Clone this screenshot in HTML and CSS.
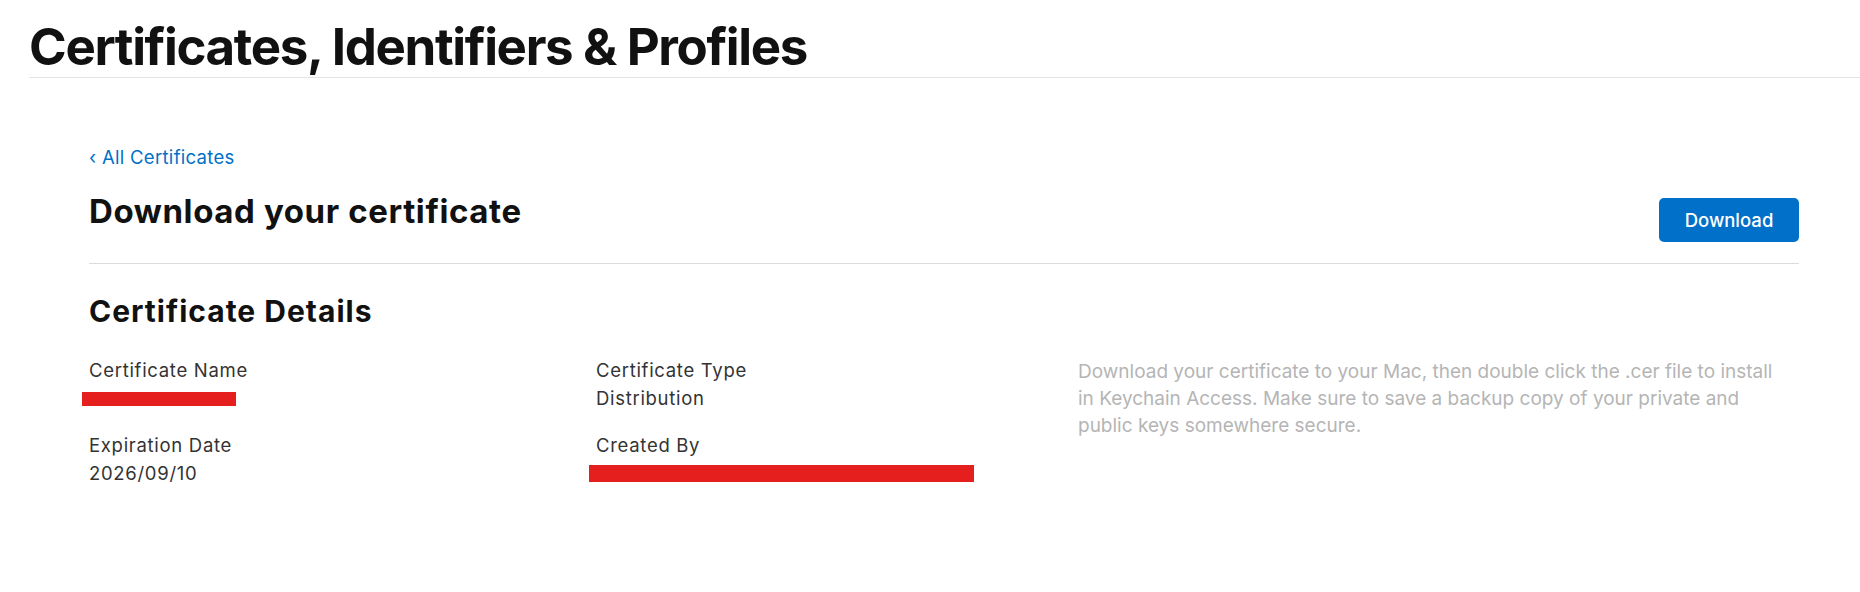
FILE: index.html
```html
<!DOCTYPE html>
<html lang="en">
<head>
<meta charset="utf-8">
<title>Certificates, Identifiers &amp; Profiles</title>
<link rel="stylesheet" href="styles.css">
</head>
<body>
  <header class="page-header">
    <h1 class="page-title">Certificates, Identifiers &amp; Profiles</h1>
  </header>
  <main class="content">
    <a class="back-link" href="#"><span class="chev">‹</span> All Certificates</a>
    <div class="head-row">
      <h2 class="head-title">Download your certificate</h2>
      <button class="btn-primary" type="button">Download</button>
    </div>
    <section class="details">
      <h3 class="details-title">Certificate Details</h3>
      <div class="details-grid">
        <div class="field">
          <div class="label">Certificate Name</div>
          <div class="value"><span class="redact redact-name"></span></div>
        </div>
        <div class="field">
          <div class="label">Certificate Type</div>
          <div class="value">Distribution</div>
        </div>
        <p class="hint">Download your certificate to your Mac, then double click the .cer file to install in Keychain Access. Make sure to save a backup copy of your private and public keys somewhere secure.</p>
        <div class="field">
          <div class="label">Expiration Date</div>
          <div class="value">2026/09/10</div>
        </div>
        <div class="field">
          <div class="label">Created By</div>
          <div class="value"><span class="redact redact-creator"></span></div>
        </div>
      </div>
    </section>
  </main>
</body>
</html>
```

FILE: styles.css
```css
* { box-sizing: border-box; }

html, body {
  margin: 0;
  padding: 0;
  background: #ffffff;
}

body {
  font-family: "Inter", "Noto Sans", "Liberation Sans", sans-serif;
  color: #333333;
  -webkit-font-smoothing: antialiased;
}

.page-header {
  margin-left: 29px;
  padding-top: 21px;
  padding-bottom: 5px;
  border-bottom: 1px solid #e3e3e3;
}

.page-title {
  margin: 0;
  font-size: 51px;
  line-height: 51px;
  font-weight: 700;
  letter-spacing: -1.35px;
  color: #111111;
}

.content {
  padding: 0 61px 0 89px;
}

.back-link {
  display: block;
  margin-top: 67px;
  font-size: 18.5px;
  line-height: 24px;
  letter-spacing: 0.3px;
  color: #0070c9;
  text-decoration: none;
}

.head-row {
  display: flex;
  justify-content: space-between;
  align-items: flex-start;
  margin-top: 24px;
  padding-bottom: 21px;
  border-bottom: 1px solid #dcdcdc;
}

.head-title {
  margin: 0;
  font-size: 33px;
  line-height: 36px;
  font-weight: 700;
  letter-spacing: 0.6px;
  color: #111111;
}

.btn-primary {
  margin-top: 5px;
  width: 140px;
  height: 44px;
  border: 0;
  border-radius: 5px;
  background: #0070c9;
  color: #ffffff;
  font-family: inherit;
  font-size: 18.5px;
  font-weight: 500;
  cursor: pointer;
}

.details-title {
  margin: 30px 0 0;
  font-size: 30px;
  line-height: 34px;
  font-weight: 700;
  letter-spacing: 1px;
  color: #111111;
}

.details-grid {
  display: grid;
  grid-template-columns: 507px 482px 1fr;
  row-gap: 19px;
  margin-top: 28px;
}

.field {
  font-size: 18.5px;
  line-height: 28px;
  letter-spacing: 0.7px;
}

.label {
  color: #333333;
}

.value {
  display: flow-root;
  color: #333333;
  height: 28px;
}

.hint {
  grid-column: 3;
  grid-row: 1 / span 2;
  margin: 2px 0 0;
  font-size: 19px;
  line-height: 27px;
  color: #b5b5b5;
  max-width: 710px;
}

.redact {
  display: block;
  background: #e51e1e;
  margin-left: -7px;
}

.redact-name {
  width: 154px;
  height: 14px;
  margin-top: 8px;
}

.redact-creator {
  width: 385px;
  height: 17px;
  margin-top: 6px;
}
```
